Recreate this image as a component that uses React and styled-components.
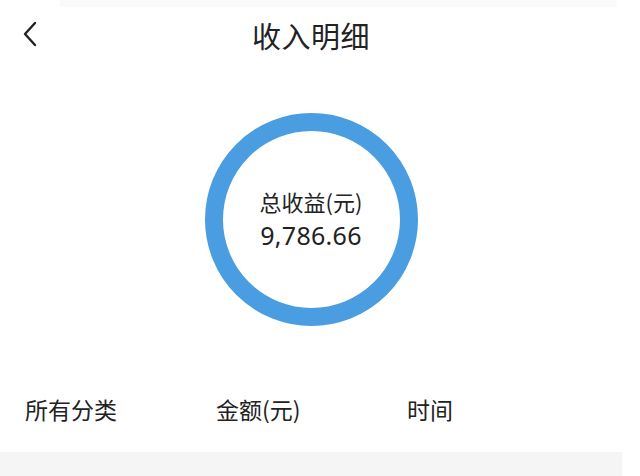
import styled, { createGlobalStyle } from 'styled-components'

const Global = createGlobalStyle`
  html, body {
    margin: 0;
    padding: 0;
    background: #fff;
  }
  body {
    font-family: 'Noto Sans CJK SC', 'Noto Sans', sans-serif;
    color: #222;
  }
`

const Page = styled.div`
  width: 622px;
  height: 476px;
  display: flex;
  flex-direction: column;
  overflow: hidden;
`

const StatusStrip = styled.div`
  height: 7px;
  margin: 0 5px 0 60px;
  background: #fafafa;
`

const Header = styled.div`
  height: 65px;
  display: flex;
  align-items: center;
  justify-content: center;
  position: relative;
`

const Back = styled.button`
  position: absolute;
  left: 19px;
  top: 12px;
  border: 0;
  background: none;
  padding: 0;
  width: 22px;
  height: 30px;
  display: flex;
  align-items: center;
  justify-content: center;
`

const Title = styled.h1`
  margin: 0;
  font-size: 29px;
  font-weight: 400;
  letter-spacing: 0.5px;
  color: #222;
  line-height: 1;
  margin-top: -8px;
`

const Summary = styled.div`
  display: flex;
  justify-content: center;
  margin-top: 41px;
`

const Ring = styled.div`
  width: 213px;
  height: 213px;
  box-sizing: border-box;
  border-radius: 50%;
  border: 18px solid #4a9de0;
  display: flex;
  flex-direction: column;
  align-items: center;
  justify-content: center;
  padding-bottom: 2px;
`

const Label = styled.div`
  font-size: 22px;
  line-height: 30px;
  color: #222;
`

const Amount = styled.div`
  font-size: 25px;
  line-height: 34px;
  margin-top: 2px;
  color: #222;
  letter-spacing: 0.3px;
  font-family: 'Noto Sans', 'Noto Sans CJK SC', sans-serif;
`

const Tabs = styled.div`
  display: grid;
  grid-template-columns: 191px 191px 1fr;
  padding-left: 25px;
  margin-top: 62px;
  height: 42px;
  align-items: center;
`

const Tab = styled.div`
  font-size: 23px;
  color: #222;
  line-height: 1;
`

const Footer = styled.div`
  margin-top: auto;
  height: 24px;
  background: #f5f5f5;
`

export default function App() {
  return (
    <>
      <Global />
      <Page>
        <StatusStrip />
        <Header>
          <Back aria-label="返回">
            <svg width="16" height="26" viewBox="0 0 16 26" fill="none">
              <path d="M13 2 L3 13 L13 24" stroke="#222" strokeWidth="2.4" strokeLinecap="round" strokeLinejoin="round" />
            </svg>
          </Back>
          <Title>收入明细</Title>
        </Header>
        <Summary>
          <Ring>
            <Label>总收益(元)</Label>
            <Amount>9,786.66</Amount>
          </Ring>
        </Summary>
        <Tabs>
          <Tab>所有分类</Tab>
          <Tab>金额(元)</Tab>
          <Tab>时间</Tab>
        </Tabs>
        <Footer />
      </Page>
    </>
  )
}
